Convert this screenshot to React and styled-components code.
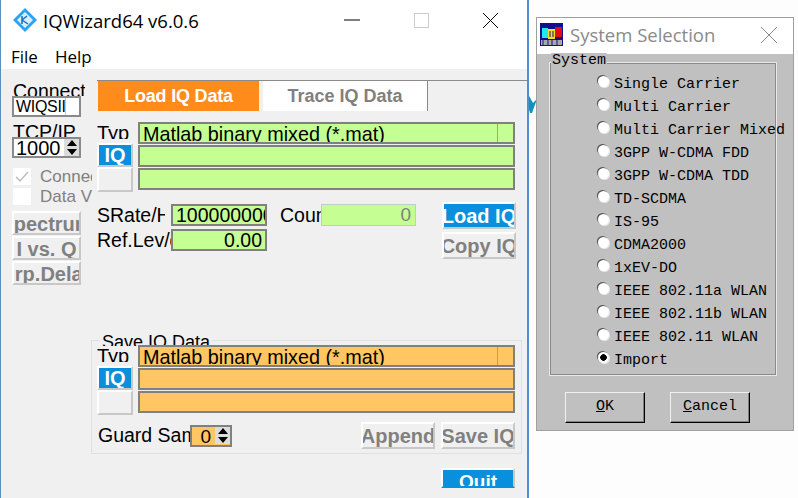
import styled, { createGlobalStyle } from 'styled-components';

const GREEN = '#c5ff93';
const ORANGE = '#ffc663';
const SYSTEMS = [
  'Single Carrier', 'Multi Carrier', 'Multi Carrier Mixed', '3GPP W-CDMA FDD', '3GPP W-CDMA TDD',
  'TD-SCDMA', 'IS-95', 'CDMA2000', '1xEV-DO', 'IEEE 802.11a WLAN', 'IEEE 802.11b WLAN',
  'IEEE 802.11 WLAN', 'Import',
];

const Spin = () => (
  <SpinBox>
    <svg width="14" height="17" viewBox="0 0 14 17">
      <path d="M7 1 L12 7 H2 Z M2 10 H12 L7 16 Z" fill="#000" />
    </svg>
  </SpinBox>
);

const IqRows = ({ $color, label }) => (
  <IqBlock>
    <TypeLabel>Typ</TypeLabel>
    <Fields>
      <FileField $color={$color}>
        <FileText>Matlab binary mixed (*.mat)</FileText>
        <FileArrow />
      </FileField>
      <FileField $color={$color} />
      <FileField $color={$color} />
    </Fields>
    <IqButtons>
      <RaisedButton $active $w={36} $h={24}>{label}</RaisedButton>
      <RaisedButton $w={36} $h={25} />
    </IqButtons>
  </IqBlock>
);

const App = () => (
  <>
    <GlobalStyle />
    <Desktop>
      <Mark width="9" height="20" viewBox="0 0 9 20">
        <path d="M0 0 L5 9 L9 5 L4 19 L2 19 L0 12 Z" fill="#0f93bd" />
      </Mark>

      <MainWindow>
        <TitleBar>
          <svg width="24" height="24" viewBox="0 0 24 24">
            <path d="M12 0 L24 12 L12 24 L0 12 Z" fill="#2aa3f0" />
            <path d="M12 4 L20 12 L12 20 L4 12 Z" fill="#d8effc" />
            <path d="M9 8 V16 M9 12 L14 8 M9 12 L15 16" stroke="#1470c0" strokeWidth="1.5" fill="none" />
          </svg>
          <TitleText>IQWizard64 v6.0.6</TitleText>
          <WindowButtons>
            <svg width="16" height="2" viewBox="0 0 16 2"><path d="M0 1 H16" stroke="#000" /></svg>
            <svg width="15" height="15" viewBox="0 0 15 15"><rect x=".5" y=".5" width="14" height="14" fill="none" stroke="#ccc" /></svg>
            <svg width="15" height="15" viewBox="0 0 15 15"><path d="M0 0 L15 15 M15 0 L0 15" stroke="#000" /></svg>
          </WindowButtons>
        </TitleBar>
        <MenuBar>
          <span>File</span>
          <span>Help</span>
        </MenuBar>

        <Body>
          <LeftColumn>
            <SideLabel>Connect</SideLabel>
            <NameBox>
              <span>WIQSII</span>
              <i />
            </NameBox>
            <SideLabel $top={5}>TCP/IP</SideLabel>
            <PortBox>
              <span>1000</span>
              <Spin />
            </PortBox>
            <CheckRow $top={10}>
              <CheckBox>
                <svg width="14" height="12" viewBox="0 0 14 12">
                  <path d="M1 6 L5 10 L13 1" stroke="#bdbdbd" strokeWidth="1.5" fill="none" />
                </svg>
              </CheckBox>
              <span>Connect</span>
            </CheckRow>
            <CheckRow $top={3}>
              <CheckBox />
              <span>Data View</span>
            </CheckRow>
            <SideButtons>
              <RaisedButton $w={69} $h={24} $line={22}>Spectrum</RaisedButton>
              <RaisedButton $w={69} $h={24} $line={22}>I vs. Q</RaisedButton>
              <RaisedButton $w={69} $h={24} $line={22}>Grp.Delay</RaisedButton>
            </SideButtons>
          </LeftColumn>

          <RightColumn>
            <Tabs>
              <LoadTab>Load IQ Data</LoadTab>
              <TraceTab>Trace IQ Data</TraceTab>
            </Tabs>

            <LoadPanel>
              <IqRows $color={GREEN} label="IQ" />
              <ParamsRow>
                <ParamGrid>
                  <ParamLabel $w={68}>SRate/Hz</ParamLabel>
                  <ValueBox $w={96}><span>100000000</span></ValueBox>
                  <ParamLabel $w={74}>Ref.Lev/dB</ParamLabel>
                  <ValueBox $w={96} $right><span>0.00</span></ValueBox>
                </ParamGrid>
                <CountWrap>
                  <ParamLabel $w={41}>Count</ParamLabel>
                  <CountBox>0</CountBox>
                </CountWrap>
                <ActionColumn>
                  <RaisedButton $active $w={74} $h={27} $line={25}>Load IQ</RaisedButton>
                  <RaisedButton $w={74} $h={27} $line={25}>Copy IQ</RaisedButton>
                </ActionColumn>
              </ParamsRow>
            </LoadPanel>

            <SaveGroup>
              <Legend>Save IQ Data</Legend>
              <IqRows $color={ORANGE} label="IQ" />
              <GuardRow>
                <GuardLabel>Guard Samples</GuardLabel>
                <GuardBox>
                  <span>0</span>
                  <Spin />
                </GuardBox>
                <GuardButtons>
                  <RaisedButton $w={74} $h={27} $line={25}>Append</RaisedButton>
                  <RaisedButton $w={74} $h={27} $line={25}>Save IQ</RaisedButton>
                </GuardButtons>
              </GuardRow>
            </SaveGroup>

            <QuitRow>
              <QuitButton><span>Quit</span></QuitButton>
            </QuitRow>
          </RightColumn>
        </Body>
      </MainWindow>

      <Dialog>
        <DialogTitle>
          <svg width="23" height="23" viewBox="0 0 23 23">
            <rect width="23" height="23" fill="#10108a" />
            <rect x="2" y="5" width="6" height="10" fill="#22e6f0" />
            <rect x="15" y="4" width="7" height="10" fill="#e01010" />
            <rect x="8" y="6" width="7" height="10" fill="#f0e020" />
            <path d="M10 8 V14 M13 8 V14" stroke="#10108a" />
            <rect x="1" y="17" width="21" height="5" fill="#a8a8a8" />
            <path d="M3 17 V22 M8 17 V22 M12 17 V22 M17 17 V22" stroke="#10108a" />
          </svg>
          <DialogName>System Selection</DialogName>
          <svg width="16" height="16" viewBox="0 0 16 16">
            <path d="M0 0 L16 16 M16 0 L0 16" stroke="#8a8a8a" />
          </svg>
        </DialogTitle>
        <DialogBody>
          <SystemGroup>
            <SystemLegend>System</SystemLegend>
            {SYSTEMS.map((name) => (
              <SystemRow key={name}>
                <Radio $on={name === 'Import'} />
                <span>{name}</span>
              </SystemRow>
            ))}
          </SystemGroup>
          <DialogButtons>
            <DialogButton><u>O</u>K</DialogButton>
            <DialogButton><u>C</u>ancel</DialogButton>
          </DialogButtons>
        </DialogBody>
      </Dialog>
    </Desktop>
  </>
);

const GlobalStyle = createGlobalStyle`
  html, body {
    margin: 0;
    padding: 0;
    overflow: hidden;
  }
  body {
    font-family: "Liberation Sans", Arial, sans-serif;
    color: #000;
  }
`;

const Desktop = styled.div`
  position: relative;
  width: 798px;
  height: 498px;
  background: #fcfdfc;
  overflow: hidden;
`;

const Mark = styled.svg`
  position: absolute;
  left: 528px;
  top: 94px;
`;

const MainWindow = styled.div`
  position: absolute;
  left: 0;
  top: 0;
  width: 526px;
  height: 498px;
  border-left: 1px solid #5a8fc0;
  border-right: 2px solid #4f8fd0;
  background: #fff;
  display: flex;
  flex-direction: column;
`;

const TitleBar = styled.div`
  height: 40px;
  flex: none;
  padding-left: 12px;
  display: flex;
  align-items: center;
  gap: 6px;
`;

const TitleText = styled.div`
  font-family: "Open Sans", sans-serif;
  font-size: 18.5px;
  width: 282px;
  white-space: nowrap;
`;

const WindowButtons = styled.div`
  display: flex;
  align-items: center;
  gap: 54px;
  margin-left: 13px;
`;

const MenuBar = styled.div`
  height: 25px;
  flex: none;
  padding: 4px 0 0 10px;
  display: flex;
  align-items: center;
  gap: 17px;
  font-family: "Open Sans", sans-serif;
  font-size: 17px;
`;

const Body = styled.div`
  flex: 1;
  min-height: 0;
  background: #f0f0f0;
  display: flex;
  overflow: hidden;
`;

const LeftColumn = styled.div`
  width: 96px;
  flex: none;
  padding: 12px 0 0 11px;
  box-sizing: border-box;
`;

const SideLabel = styled.div`
  font-size: 19.5px;
  line-height: 21px;
  height: 15px;
  margin-top: ${(p) => p.$top || 0}px;
  margin-left: 1px;
  width: 72px;
  overflow: hidden;
  white-space: nowrap;
`;

const NameBox = styled.div`
  width: 69px;
  height: 21px;
  box-sizing: border-box;
  border: 2px solid #8a8a8a;
  background: #fff;
  display: flex;
  font-size: 16px;
  line-height: 18px;
  padding-left: 2px;
  overflow: hidden;
  letter-spacing: -0.3px;

  span {
    width: 49px;
    white-space: nowrap;
  }
  i {
    width: 1px;
    background: #c8c8c8;
  }
`;

const PortBox = styled.div`
  width: 69px;
  height: 21px;
  box-sizing: border-box;
  border: 2px solid #8a8a8a;
  background: #fff;
  display: flex;
  justify-content: space-between;
  font-size: 20px;
  line-height: 19px;
  padding-left: 2px;
`;

const SpinBox = styled.div`
  width: 15px;
  height: 17px;
  flex: none;
  background: #dcdcdc;
  display: flex;
  align-items: center;
  justify-content: center;
  svg { display: block; }
`;

const CheckRow = styled.div`
  display: flex;
  align-items: center;
  gap: 9px;
  height: 17px;
  width: 79px;
  margin-top: ${(p) => p.$top}px;
  margin-left: 1px;
  overflow: hidden;
  white-space: nowrap;
  font-size: 17px;
  color: #808080;
`;

const CheckBox = styled.div`
  width: 18px;
  height: 17px;
  flex: none;
  background: #fff;
  display: flex;
  align-items: center;
  justify-content: center;
`;

const SideButtons = styled.div`
  display: flex;
  flex-direction: column;
  gap: 1px;
  margin-top: 6px;
`;

const RaisedButton = styled.div`
  width: ${(p) => p.$w}px;
  height: ${(p) => p.$h}px;
  box-sizing: border-box;
  border: 2px solid;
  border-color: #fff #c8c8c8 #c8c8c8 #fff;
  background: ${(p) => (p.$active ? '#0a8fdc' : '#f0f0f0')};
  color: ${(p) => (p.$active ? '#fff' : '#808080')};
  font-size: 20px;
  font-weight: bold;
  line-height: ${(p) => p.$line || 21}px;
  display: flex;
  justify-content: center;
  overflow: hidden;
  white-space: nowrap;
`;

const RightColumn = styled.div`
  flex: 1;
  min-width: 0;
  display: flex;
  flex-direction: column;
`;

const Tabs = styled.div`
  height: 30px;
  margin-top: 11px;
  padding-left: 1px;
  border-top: 1px solid #8a8a8a;
  display: flex;
  gap: 4px;
  font-size: 18px;
  font-weight: bold;
`;

const LoadTab = styled.div`
  width: 161px;
  background: #ff8c1a;
  color: #fff;
  letter-spacing: -0.2px;
  display: flex;
  align-items: center;
  justify-content: center;
`;

const TraceTab = styled.div`
  width: 164px;
  background: #fff;
  color: #808080;
  border-right: 1px solid #8a8a8a;
  display: flex;
  align-items: center;
  justify-content: center;
`;

const LoadPanel = styled.div`
  height: 229px;
  padding-top: 11px;
  box-sizing: border-box;
`;

const IqBlock = styled.div`
  position: relative;
  height: 70px;
  width: 418px;
`;

const TypeLabel = styled.div`
  position: absolute;
  left: 0;
  top: 0;
  height: 17px;
  width: 38px;
  overflow: hidden;
  font-size: 20px;
  line-height: 22px;
`;

const Fields = styled.div`
  position: absolute;
  left: 41px;
  top: 0;
  width: 377px;
  display: flex;
  flex-direction: column;
  gap: 1px;
`;

const FileField = styled.div`
  height: 22px;
  box-sizing: border-box;
  border: 2px solid #808080;
  background: ${(p) => p.$color};
  display: flex;
  justify-content: space-between;
  overflow: hidden;
`;

const FileText = styled.span`
  font-size: 19.8px;
  line-height: 21px;
  height: 18px;
  padding-left: 3px;
  overflow: hidden;
  white-space: nowrap;
`;

const FileArrow = styled.i`
  width: 15px;
  border-left: 1px solid #a0a0a0;
`;

const IqButtons = styled.div`
  position: absolute;
  left: 0;
  top: 21px;
  display: flex;
  flex-direction: column;
`;

const ParamsRow = styled.div`
  display: flex;
  align-items: flex-start;
  margin-top: 10px;
  width: 418px;
`;

const ParamGrid = styled.div`
  display: grid;
  grid-template-columns: 74px 96px;
  row-gap: 3px;
  margin-top: 2px;
`;

const ParamLabel = styled.div`
  width: ${(p) => p.$w}px;
  font-size: 19.5px;
  line-height: 22px;
  white-space: nowrap;
  overflow: hidden;
`;

const ValueBox = styled.div`
  width: ${(p) => p.$w}px;
  height: 22px;
  box-sizing: border-box;
  border: 2px solid #808080;
  background: ${GREEN};
  font-size: 19.5px;
  line-height: 19px;
  padding: 0 3px;
  display: flex;
  justify-content: ${(p) => (p.$right ? 'flex-end' : 'flex-start')};
  overflow: hidden;
`;

const CountWrap = styled.div`
  display: flex;
  margin: 2px 0 0 13px;
  height: 22px;
`;

const CountBox = styled.div`
  width: 95px;
  height: 22px;
  box-sizing: border-box;
  border: 1px solid #c8c8c8;
  background: ${GREEN};
  color: #808080;
  text-align: right;
  padding-right: 4px;
  font-size: 19px;
  line-height: 20px;
`;

const ActionColumn = styled.div`
  display: flex;
  flex-direction: column;
  gap: 3px;
  margin-left: 26px;
`;

const SaveGroup = styled.div`
  position: relative;
  box-sizing: border-box;
  width: 431px;
  height: 114px;
  margin-left: -6px;
  padding: 4px 0 0 5px;
  border: 1px solid #e0e0e0;
`;

const Legend = styled.div`
  position: absolute;
  left: 8px;
  top: -8px;
  height: 13px;
  overflow: hidden;
  padding: 0 2px;
  background: #f0f0f0;
  font-size: 18px;
  line-height: 18px;
`;

const GuardRow = styled.div`
  display: flex;
  align-items: center;
  margin-top: 7px;
  width: 418px;
`;

const GuardLabel = styled.div`
  width: 92px;
  margin-left: 1px;
  font-size: 19.5px;
  white-space: nowrap;
  overflow: hidden;
`;

const GuardBox = styled.div`
  width: 42px;
  height: 22px;
  box-sizing: border-box;
  border: 2px solid #808080;
  background: ${ORANGE};
  display: flex;
  justify-content: flex-end;
  gap: 4px;
  font-size: 19px;
  line-height: 20px;
`;

const GuardButtons = styled.div`
  display: flex;
  gap: 6px;
  margin-left: auto;
`;

const QuitRow = styled.div`
  display: flex;
  justify-content: flex-end;
  width: 418px;
  margin-top: 14px;
`;

const QuitButton = styled.div`
  width: 74px;
  height: 20px;
  box-sizing: border-box;
  border: 2px solid;
  border-color: #fff #c8c8c8 transparent #fff;
  background: #0a8fdc;
  color: #fff;
  font-size: 19px;
  font-weight: bold;
  text-align: center;
  line-height: 23px;
  overflow: hidden;
`;

const Dialog = styled.div`
  position: absolute;
  left: 536px;
  top: 17px;
  width: 258px;
  height: 414px;
  box-sizing: border-box;
  border: 1px solid #a0a0a0;
  background: #c0c0c0;
  display: flex;
  flex-direction: column;
`;

const DialogTitle = styled.div`
  height: 36px;
  flex: none;
  box-sizing: border-box;
  padding: 0 16px 3px 3px;
  background: #fff;
  display: flex;
  align-items: center;
  gap: 7px;
`;

const DialogName = styled.div`
  flex: 1;
  font-family: "Open Sans", sans-serif;
  font-size: 18.5px;
  color: #8a8a8a;
`;

const DialogBody = styled.div`
  flex: 1;
  padding: 8px 16px 0 12px;
  font-family: "Liberation Mono", monospace;
  font-size: 15px;
`;

const SystemGroup = styled.div`
  position: relative;
  box-sizing: border-box;
  height: 314px;
  padding-top: 9px;
  border: 2px solid;
  border-color: #e8e8e8;
  outline: 1px solid #8a8a8a;
  outline-offset: -2px;
`;

const SystemLegend = styled.div`
  position: absolute;
  left: 0;
  top: -11px;
  background: #c0c0c0;
  padding: 0 1px;
  line-height: 16px;
`;

const SystemRow = styled.div`
  height: 23px;
  display: flex;
  align-items: center;
  padding-left: 47px;
  gap: 5px;
  white-space: nowrap;
`;

const Radio = styled.i`
  width: 11px;
  height: 11px;
  margin-top: -6px;
  border-radius: 50%;
  flex: none;
  background: ${(p) => (p.$on ? 'radial-gradient(circle, #000 0 3px, #fff 3.5px)' : '#fff')};
  box-shadow: -1px -1px 0 #555, 1px 1px 0 #e8e8e8;
`;

const DialogButtons = styled.div`
  display: flex;
  gap: 25px;
  margin: 16px 0 0 16px;
`;

const DialogButton = styled.div`
  width: 80px;
  height: 31px;
  box-sizing: border-box;
  border: 1px solid;
  border-color: #f0f0f0 #000 #000 #f0f0f0;
  box-shadow: inset -1px -1px 0 #808080;
  text-align: center;
  line-height: 27px;
`;

export default App;
